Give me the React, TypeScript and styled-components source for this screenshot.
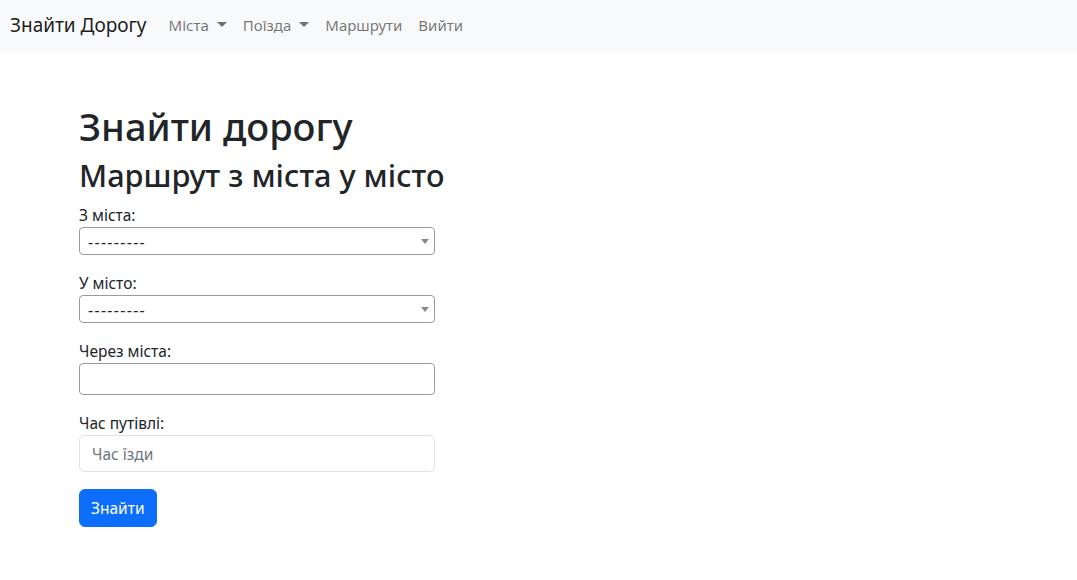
import React from "react";
import styled, { createGlobalStyle } from "styled-components";

const Global = createGlobalStyle`
  html, body { margin: 0; padding: 0; background: #fff; }
  body {
    font-family: "Noto Sans", "Open Sans", sans-serif;
    font-size: 16px;
    line-height: 1.5;
    color: #212529;
  }
  * { box-sizing: border-box; }
`;

const Navbar = styled.nav`
  height: 53px;
  background: #f8f9fa;
  display: flex;
  align-items: center;
  padding: 0 10px 3px;
`;

const Brand = styled.a`
  font-size: 19px;
  color: rgba(0, 0, 0, 0.9);
  text-decoration: none;
  margin-right: 14px;
  line-height: 30px;
`;

const NavList = styled.div`
  display: flex;
  align-items: center;
`;

const NavLink = styled.a`
  color: rgba(0, 0, 0, 0.55);
  text-decoration: none;
  padding: 8px;
  font-size: 15px;
  display: flex;
  align-items: center;
`;

const Caret = styled.span`
  display: inline-block;
  margin-left: 8px;
  width: 0;
  height: 0;
  border-top: 5px solid rgba(0, 0, 0, 0.55);
  border-left: 5px solid transparent;
  border-right: 5px solid transparent;
  margin-top: -1px;
`;

const Main = styled.main`
  padding: 50px 0 0 79px;
`;

const H1 = styled.h1`
  font-size: 38px;
  font-weight: 500;
  line-height: 46px;
  margin: 0 0 8px;
`;

const H2 = styled.h2`
  font-size: 30.7px;
  font-weight: 500;
  line-height: 37px;
  margin: 0 0 9px;
`;

const Form = styled.form`
  width: 356px;
  display: flex;
  flex-direction: column;
`;

const Field = styled.div`
  display: flex;
  flex-direction: column;
  margin-bottom: 16px;
`;

const Label = styled.label`
  font-size: 15.5px;
  line-height: 24px;
`;

const SelectWrap = styled.div`
  position: relative;
  height: 28px;
`;

const Select = styled.select`
  appearance: none;
  width: 100%;
  height: 28px;
  border: 1px solid #9a9a9a;
  border-radius: 4px;
  background: #fff;
  font-family: inherit;
  font-size: 16px;
  letter-spacing: 1.3px;
  color: #212529;
  padding: 2px 8px 0;
`;

const Arrow = styled.span`
  position: absolute;
  right: 6px;
  top: 12px;
  width: 0;
  height: 0;
  border-top: 5px solid #888;
  border-left: 4px solid transparent;
  border-right: 4px solid transparent;
  pointer-events: none;
`;

const PlainInput = styled.input`
  width: 100%;
  height: 32px;
  border: 1px solid #9a9a9a;
  border-radius: 4px;
  font-family: inherit;
  font-size: 16px;
`;

const FormControl = styled.input`
  width: 100%;
  height: 37px;
  border: 1px solid #dee2e6;
  border-radius: 6px;
  padding: 6px 12px;
  font-family: inherit;
  font-size: 15.5px;
  color: #212529;
  &::placeholder { color: #6c757d; }
`;

const Button = styled.button`
  align-self: flex-start;
  height: 38px;
  padding: 0 11px;
  background: #0d6efd;
  border: 1px solid #0d6efd;
  border-radius: 6px;
  color: #fff;
  font-family: inherit;
  font-size: 15.5px;
  margin-top: 1px;
`;

export default function App() {
  return (
    <>
      <Global />
      <Navbar>
        <Brand href="#">Знайти Дорогу</Brand>
        <NavList>
          <NavLink href="#">Міста<Caret /></NavLink>
          <NavLink href="#">Поїзда<Caret /></NavLink>
          <NavLink href="#">Маршрути</NavLink>
          <NavLink href="#">Вийти</NavLink>
        </NavList>
      </Navbar>
      <Main>
        <H1>Знайти дорогу</H1>
        <H2>Маршрут з міста у місто</H2>
        <Form onSubmit={(e) => e.preventDefault()}>
          <Field>
            <Label>З міста:</Label>
            <SelectWrap>
              <Select defaultValue="">
                <option value="">---------</option>
              </Select>
              <Arrow />
            </SelectWrap>
          </Field>
          <Field>
            <Label>У місто:</Label>
            <SelectWrap>
              <Select defaultValue="">
                <option value="">---------</option>
              </Select>
              <Arrow />
            </SelectWrap>
          </Field>
          <Field>
            <Label>Через міста:</Label>
            <PlainInput />
          </Field>
          <Field>
            <Label>Час путівлі:</Label>
            <FormControl placeholder="Час їзди" />
          </Field>
          <Button type="submit">Знайти</Button>
        </Form>
      </Main>
    </>
  );
}
